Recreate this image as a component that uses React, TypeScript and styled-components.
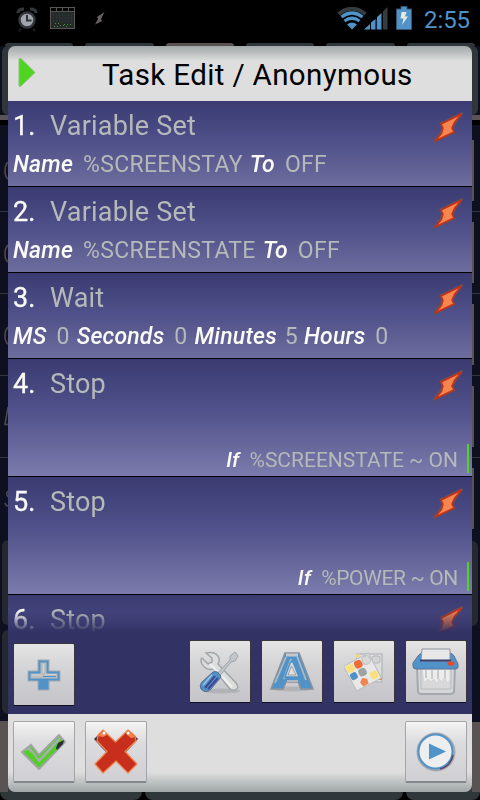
import React, { FunctionComponent, ReactNode } from 'react';
import styled, { createGlobalStyle } from 'styled-components';

const GlobalStyle = createGlobalStyle`
  body {
    margin: 0;
    background: #000;
    font-family: Roboto, 'Liberation Sans', sans-serif;
  }
`;

type RailPieceProps = {
  h: number;
  fill?: string;
};

type RowProps = {
  tall?: boolean;
};

type ToolButtonProps = {
  flat?: boolean;
};

const Screen = styled.div`
    width: 480px;
    height: 800px;
    overflow: hidden;
    background: #000;
    display: flex;
    flex-direction: column;
  `,
  StatusBar = styled.div`
    box-sizing: border-box;
    height: 43px;
    padding: 0 10px 6px 16px;
    display: flex;
    align-items: center;
    color: #4f93c9;
  `,
  StatusLeft = styled.div`
    flex: 1;
    display: flex;
    align-items: center;
    height: 38px;
  `,
  Clock = styled.span`
    font-size: 24px;
    line-height: 38px;
    margin-left: 11px;
    letter-spacing: -0.1px;
    padding-top: 2px;
  `,
  TabTops = styled.div`
    height: 3px;
    padding: 0 5px;
    display: flex;
    gap: 12px;
  `,
  TabTop = styled.div<{ active?: boolean }>`
    flex: 1;
    border-radius: 8px 8px 0 0;
    background: ${(props) => (props.active ? '#5a5252' : '#30373a')};
  `,
  Stage = styled.div`
    height: 746px;
    display: grid;
    grid-template-columns: 8px 464px 8px;
  `,
  Rail = styled.div`
    display: flex;
    flex-direction: column;
    overflow: hidden;
    background: #0e1020;
  `,
  RailPiece = styled.div<RailPieceProps>`
    flex: none;
    height: ${(props) => props.h}px;
    background: ${(props) => props.fill || '#0e1020'};
  `,
  RailButton = styled(RailPiece)`
    width: 2px;
    background: #5a5353;
  `,
  RailEdge = styled(RailPiece)<{ side: 'left' | 'right' }>`
    margin: ${(props) => (props.side === 'left' ? '0 0 0 2px' : '0 2px 0 0')};
    border-radius: ${(props) => (props.side === 'left' ? '8px 0 0 8px' : '0 8px 8px 0')};
  `,
  RailMark = styled.svg`
    flex: none;
    display: block;
    width: 8px;
    height: 20px;
    fill: none;
    stroke: #4c4848;
    stroke-width: 1.6;
  `,
  DialogBack = styled.div`
    background: #30373a;
  `,
  Dialog = styled.div`
    height: 746px;
    display: flex;
    flex-direction: column;
    overflow: hidden;
    border-radius: 7px;
    background: #323264;
  `,
  Header = styled.header`
    box-sizing: border-box;
    height: 55px;
    display: flex;
    align-items: center;
    padding: 3px 0 0 9px;
    background: linear-gradient(#a3a9a9 0, #b4b8b8 5px, #dedede 15px);
  `,
  PlayWrap = styled.span`
    display: flex;
    margin-top: -5px;
  `,
  Title = styled.h1`
    margin: 0 0 0 66px;
    font-size: 29.5px;
    line-height: 40px;
    font-weight: 400;
    letter-spacing: 0.36px;
    white-space: nowrap;
    color: #000;
  `,
  List = styled.div`
    height: 531px;
    overflow: hidden;
    mask-image: linear-gradient(#000 510px, transparent 532px);
  `,
  Row = styled.div<RowProps>`
    box-sizing: border-box;
    height: ${(props) => (props.tall ? 118 : 86)}px;
    padding-top: 5px;
    border-bottom: 1px solid #000;
    display: flex;
    flex-direction: column;
    background: ${(props) =>
      props.tall
        ? 'linear-gradient(#3b3b72, #50508a 42%, #7b7bac)'
        : 'linear-gradient(#3b3b72, #50508a 48%, #6d6d9e)'};
  `,
  RowHead = styled.div`
    height: 41px;
    display: flex;
    padding: 0 8px 0 5px;
    font-size: 27px;
    line-height: 40px;
  `,
  RowNumber = styled.span`
    width: 37px;
    color: #fafaf6;
    -webkit-text-stroke: 0.3px #fafaf6;
  `,
  RowName = styled.span`
    flex: 1;
    color: #b6b9b9;
    letter-spacing: 0.2px;
  `,
  Params = styled.div`
    display: flex;
    padding-left: 5px;
    font-size: 23px;
    line-height: 36px;
    white-space: pre;
  `,
  Label = styled.span`
    color: #fafaf6;
    font-style: italic;
    font-weight: 500;
    letter-spacing: 0.2px;
    margin-right: 10px;
  `,
  Value = styled.span`
    color: #b6b9b9;
    letter-spacing: 0.3px;
    margin-right: 7px;
  `,
  ShortValue = styled(Value)`
    margin: 0 6px 0 -2px;
  `,
  Condition = styled.div<{ tight?: boolean }>`
    margin: 39px 3px 0 0;
    height: 29px;
    display: flex;
    justify-content: flex-end;
    border-right: 2px solid #4fd51f;
    padding-right: 2px;
    font-size: 21px;
    line-height: 32px;
    white-space: pre;

    ${Value} {
      letter-spacing: ${(props) => (props.tight ? '-0.35px' : '0')};
    }
  `,
  Toolbar = styled.div`
    box-sizing: border-box;
    height: 82px;
    padding: 8px 5px 0 5px;
    display: flex;
    gap: 10px;
  `,
  PlusSlot = styled.div`
    flex: 1;
    padding-top: 3px;
  `,
  Footer = styled.footer`
    box-sizing: border-box;
    height: 78px;
    padding: 7px 5px 0 5px;
    display: flex;
    gap: 10px;
    background: linear-gradient(#dedede 58px, #a3a9a9 77px);
  `,
  Spacer = styled.div`
    flex: 1;
  `,
  ToolButton = styled.button<ToolButtonProps>`
    box-sizing: border-box;
    width: 62px;
    height: ${(props) => (props.flat ? 62 : 63)}px;
    padding: 0;
    display: flex;
    align-items: center;
    justify-content: center;
    border: 1px solid ${(props) => (props.flat ? '#a3a5a9' : '#38383a')};
    border-bottom: ${(props) => (props.flat ? '2px solid #85888b' : '1px solid #101020')};
    border-radius: 2px;
    background: ${(props) =>
      props.flat ? 'linear-gradient(#f4f4f4, #dcdcde 35%, #d0d0d4)' : 'linear-gradient(#e4e4e4, #d4d4d6 40%, #c4c4c9)'};
  `,
  TabBottoms = styled.div`
    height: 8px;
    display: grid;
    grid-template-columns: 142px 258px 74px;
    gap: 3px;
  `,
  TabBottom = styled.div`
    border-radius: 0 0 8px 8px;
    background: #30373a;
  `,
  BoltWrap = styled.span`
    display: flex;
    padding-top: 6px;
  `,
  AlarmWrap = styled.span`
    display: flex;
    margin-right: 12px;
  `,
  BoltStatusWrap = styled.span`
    display: flex;
    margin-left: 19px;
  `,
  BatteryWrap = styled.span`
    display: flex;
    margin: 0 1px 2px 8px;
  `,
  WifiWrap = styled.span`
    display: flex;
    margin-right: -3px;
  `;

const AlarmIcon = () => (
  <svg width="22" height="26" viewBox="0 0 22 26">
    <path d="M2 7Q2 3 8 3M14 3Q20 3 20 7" stroke="#33383c" strokeWidth="3" fill="none" />
    <circle cx="11" cy="14" r="7.5" fill="#a3a5ad" stroke="#34383c" strokeWidth="2.5" />
    <path d="M11 9v5.500h4.500" stroke="#30343a" strokeWidth="2" fill="none" />
    <path d="M5 23l-2 2M17 23l2 2" stroke="#1d2024" strokeWidth="2" />
  </svg>
);

const CalendarIcon = () => (
  <svg width="26" height="23" viewBox="0 0 26 23">
    <rect x="0.5" y="0.5" width="24" height="21" fill="#252a2a" stroke="#5a5656" />
    <path d="M1 2.500h23" stroke="#050505" strokeWidth="3" />
    <path d="M6.500 1v4M12.500 1v4M18.500 1v4M1 4.500h23" stroke="#575353" />
    <path d="M3 8h20M3 11h20M3 14h20" stroke="#3a4040" strokeDasharray="1 2" />
    <path d="M4 19.500h4M5 16.500h5M10 18.500h4M14 17.500h8M16 19.500h3" stroke="#499334" strokeDasharray="1 2" />
  </svg>
);

const SmallBolt = () => (
  <svg width="10" height="13" viewBox="0 0 10 13">
    <path d="M9.500 0L6 7l1 2L0 12.500 3 7 2 5z" fill="#696064" />
  </svg>
);

const WifiIcon = () => (
  <svg width="30" height="23" viewBox="0 0 30 23">
    <path d="M1.500 7Q15-3.500 28.500 7" stroke="#353c3f" strokeWidth="4" fill="none" />
    <path d="M4.500 10Q15 2 25.500 10M7.500 14Q15 8.500 22.500 14" stroke="#4f93c9" strokeWidth="3.200" fill="none" />
    <path d="M10 17.500Q15 13.500 20 17.500L15 22.500z" fill="#4f93c9" />
  </svg>
);

const SignalIcon = () => (
  <svg width="24" height="23" viewBox="0 0 24 23">
    <path d="M0 22.500L6 17v5.500zM7 15.500L11.500 12v10.500H7zM13 10l4.500-4v16.500H13z" fill="#4f93c9" />
    <path d="M19 4.500L23.500 0v22.500H19z" fill="#353c3f" />
    <path d="M12 12v10.500M17.500 6v16.500" stroke="#303a86" />
  </svg>
);

const BatteryIcon = () => (
  <svg width="16" height="24" viewBox="0 0 16 24">
    <path d="M5 0.500h6V3h4.500v20.500H0.500V3H5z" fill="#4f93c9" stroke="#3b5370" />
    <path d="M5.500 6h5L9 10.500h3L6 19l1.500-6.500h-3z" fill="#e8e8e0" />
  </svg>
);

const BoltIcon = () => (
  <svg width="31" height="31" viewBox="0 0 31 31">
    <path
      d="M29.500 1L7.500 11.500 9.500 15.500 7.500 21 0.500 30 21 20.500 19.500 16 22 11z"
      fill="#f6854e"
      stroke="#665454"
      strokeWidth="2"
    />
    <path
      d="M28.500 2L8 12l2 4-1.500 5.500L2 29 21 20l-2-4 2.500-5.500z"
      fill="#f6854e"
      stroke="#c72e1b"
      strokeWidth="1.500"
    />
  </svg>
);

const PlayMark = () => (
  <svg width="19" height="31" viewBox="0 0 19 31">
    <path d="M2 3Q2 0.500 4 1.500L18 15.500 4 29Q2 30.500 2 28z" fill="#4fd51f" stroke="#8bbd80" strokeLinejoin="round" />
  </svg>
);

const PlusIcon = () => (
  <svg width="34" height="32" viewBox="0 0 34 32">
    <path d="M12 2h9v11h11v8H21v9h-9v-9H2v-8h10z" fill="#b0b5ba" stroke="#aaa" strokeWidth="3" />
    <path d="M12.500 2.500h8v11h11v7h-11v9h-8v-9h-10v-7h10z" fill="#b9bcbd" stroke="#4f93c9" strokeWidth="2" />
    <path d="M13 20h7v9h-7zM16 17.500h13" fill="#4f93c9" stroke="#4f93c9" />
    <path d="M16.500 5v9M5 16h10M18 15.500h11" stroke="#d2d3d3" strokeWidth="1.200" />
  </svg>
);

const ToolsIcon = () => (
  <svg width="44" height="46" viewBox="0 0 44 46">
    <ellipse cx="24" cy="42" rx="18" ry="2.500" fill="#b2b3b7" />
    <path
      d="M8 4Q18 2 21 9 22 12 20 15L38 34Q42 39 37 41 34 42 31 39L16 20Q8 22 4 15 2 11 4 9L10 15 14 13 14 9z"
      fill="#dcdddd"
      stroke="#a1a5a8"
      strokeWidth="1.500"
    />
    <path d="M12 15l22 23" stroke="#f2f2f2" strokeWidth="2" />
    <path d="M17 27L32 11 32 7 37 3 40 7 37 12 33 13 20 29z" fill="#c3c6c9" stroke="#a0a4ab" />
    <path d="M15 23Q20 21 23 28L13 40Q8 45 3 40 1 36 4 33z" fill="#4f93c9" stroke="#59678d" />
    <path d="M17 27L7 39M20 29L10 40" stroke="#414892" strokeWidth="2" />
    <path d="M14 26L5 36" stroke="#9fc3df" strokeWidth="1.500" />
  </svg>
);

const LetterIcon = () => (
  <svg width="46" height="42" viewBox="0 0 46 42">
    <ellipse cx="23" cy="38" rx="20" ry="2.500" fill="#b2b3b7" />
    <path d="M16 2h14l14 36H32l-3-7H17l-3 7H2z" fill="#4f93c9" stroke="#8a9199" strokeWidth="1.500" />
    <path d="M17 4h12" stroke="#c4c8cb" strokeWidth="3" />
    <path d="M17 6L6 32M28 5l9 24M18 30h11M22 8l-7 20" stroke="#b0b9c0" strokeWidth="1.800" fill="none" />
    <path d="M21.500 11L16 26h14l-6-15z" fill="#d7d8da" stroke="#4f93c9" strokeWidth="1.500" />
    <path d="M22.500 15L19 24h8z" fill="#dedede" stroke="#9ba2a8" />
  </svg>
);

const GalleryIcon = () => (
  <svg width="40" height="42" viewBox="0 0 40 42">
    <path d="M13 3h25v28H13z" fill="#dedede" stroke="#bbbcbe" strokeWidth="1.500" />
    <rect x="28" y="5" width="8" height="7" rx="2" fill="#d2d3d5" stroke="#b3b5b8" />
    <circle cx="14" cy="5" r="2" fill="#f4d982" />
    <path d="M32 28h6" stroke="#ef8545" strokeWidth="2" />
    <g transform="rotate(-28 19 22)">
      <path d="M5 7h28v28H5z" fill="#e8e8e8" stroke="#bdbec0" />
      <rect x="6" y="8" width="8" height="8" rx="3" fill="#fae07b" />
      <rect x="15" y="8" width="8" height="8" rx="3" fill="#ef6d39" />
      <rect x="24" y="8" width="8" height="8" rx="3" fill="#d8d8d8" stroke="#bfc0c2" />
      <rect x="6" y="17" width="7" height="7" rx="2" fill="#5091c5" />
      <rect x="15" y="17" width="8" height="8" rx="3" fill="#9da3a3" />
      <rect x="24" y="25" width="8" height="8" rx="3" fill="#fae07b" />
      <path d="M16 26l4 3-1 5h-6l-1-5z" fill="#f08550" />
    </g>
  </svg>
);

const ShredderIcon = () => (
  <svg width="48" height="48" viewBox="0 0 48 48">
    <path d="M5 19h38l-1 25Q41 46 38 46H10Q6 46 6 43z" fill="#d5d6d8" stroke="#a5a8ae" strokeWidth="2" />
    <path d="M9 21v20h30V21" fill="#d8d8da" stroke="#b7b9bd" />
    <path
      d="M10 21h28v11l-3 3-2-6-3 5-3-3-2 5-3-5-3 3-3-3-4 4z"
      fill="#ececec"
      stroke="#d0d1d3"
      strokeWidth="0.800"
    />
    <path d="M14 22v8M20 22v9M26 22v9M33 22v8" stroke="#c9cacc" strokeWidth="2" />
    <path d="M6 8Q8 5 12 5h24q5 0 6 3l4 8v3q0 2-3 2H4q-3 0-3-3v-3z" fill="#4f93c9" stroke="#5c7096" />
    <path d="M10 1h28v12H9z" fill="#e8e8e8" stroke="#8f9499" />
    <path d="M8 12.500h31" stroke="#37406e" strokeWidth="2" />
    <ellipse cx="39" cy="15.500" rx="3.500" ry="2.200" fill="#e64b30" />
  </svg>
);

const CheckIcon = () => (
  <svg width="46" height="36" viewBox="0 0 46 36">
    <path d="M1 18L10 11l8 10L38 1l6 7L18 35z" fill="#51cf27" stroke="#a0a4a5" strokeWidth="2" />
    <path d="M3 17l6-4 9 12L38 3l2 2-22 24-7-10z" fill="#a6afa9" />
    <path d="M3 18l4-1 11 13L36 14" fill="none" stroke="#51cf27" strokeWidth="2" />
    <path d="M35 14l2-5 6-3-1 4-6 6z" fill="#272d31" />
  </svg>
);

const CrossIcon = () => (
  <svg width="46" height="46" viewBox="0 0 46 46">
    <path d="M1 10l9-8 13 12L36 2l9 8-12 13H13z" fill="#2d3037" stroke="#8a898c" />
    <path
      d="M10 1l12.500 12L35 1l7 6 1 5-11 10.500 12 12.500-9 9-12-12-13 12-8-9L14 22.500 4 12 5 6z"
      fill="#c72e1b"
      stroke="#f08550"
      strokeWidth="1.200"
      strokeLinejoin="round"
    />
    <path d="M5 7l5-5 4 4-4 2zM36 2l6 6-4 1-5-4z" fill="#f3824f" />
    <circle cx="11" cy="4" r="1.500" fill="#fff" />
    <circle cx="35" cy="4" r="1.500" fill="#fff" />
  </svg>
);

const RunIcon = () => (
  <svg width="40" height="40" viewBox="0 0 40 40">
    <circle cx="20" cy="20" r="18" fill="#f2f2f2" stroke="#a8a8b0" strokeWidth="3" />
    <circle cx="19.500" cy="19.500" r="17" fill="#eeeeee" stroke="#4f93c9" strokeWidth="2" />
    <path d="M24 37Q35 34 37 23" fill="none" stroke="#5c466a" strokeWidth="1.500" />
    <path d="M13 11.500L30 19.500l-17 8z" fill="#4f93c9" />
  </svg>
);

const RailCurve = () => (
  <RailMark viewBox="0 0 8 20">
    <path d="M8 2Q5 5 5 11T8 19" />
  </RailMark>
);

type ActionRowProps = {
  index: number;
  name: string;
  tall?: boolean;
  children?: ReactNode;
};

const ActionRow: FunctionComponent<ActionRowProps> = ({ index, name, tall, children }) => {
  return (
    <Row tall={tall}>
      <RowHead>
        <RowNumber>{index}.</RowNumber>
        <RowName>{name}</RowName>
        <BoltWrap>
          <BoltIcon />
        </BoltWrap>
      </RowHead>
      {children}
    </Row>
  );
};

const App: FunctionComponent = () => {
  return (
    <Screen>
      <GlobalStyle />
      <StatusBar>
        <StatusLeft>
          <AlarmWrap>
            <AlarmIcon />
          </AlarmWrap>
          <CalendarIcon />
          <BoltStatusWrap>
            <SmallBolt />
          </BoltStatusWrap>
        </StatusLeft>
        <WifiWrap>
          <WifiIcon />
        </WifiWrap>
        <SignalIcon />
        <BatteryWrap>
          <BatteryIcon />
        </BatteryWrap>
        <Clock>2:55</Clock>
      </StatusBar>
      <TabTops>
        <TabTop />
        <TabTop />
        <TabTop active />
        <TabTop />
        <TabTop />
        <TabTop />
      </TabTops>
      <Stage>
        <Rail>
          <RailEdge side="left" h={69} fill="#30373a" />
          <RailPiece h={5} fill="#5a5353" />
          <RailPiece h={5} fill="#000" />
          <RailPiece h={35} />
          <RailCurve />
          <RailPiece h={31} />
          <RailPiece h={1} fill="#33363c" />
          <RailPiece h={31} />
          <RailCurve />
          <RailPiece h={30} />
          <RailPiece h={1} fill="#33363c" />
          <RailPiece h={31} />
          <RailCurve />
          <RailPiece h={30} />
          <RailPiece h={1} fill="#33363c" />
          <RailPiece h={30} />
          <RailMark viewBox="0 0 8 20">
            <path d="M8 1L5 18.500h3" />
          </RailMark>
          <RailPiece h={31} />
          <RailPiece h={1} fill="#33363c" />
          <RailPiece h={30} />
          <RailMark viewBox="0 0 8 20">
            <path d="M8 3Q5.500 5 8 9M5 15Q6 18 8 18" />
          </RailMark>
          <RailPiece h={32} />
          <RailEdge side="left" h={85} fill="#25292f" />
          <RailPiece h={5} />
          <RailEdge side="left" h={84} fill="#25292f" />
          <RailPiece h={7} />
          <RailPiece h={72} fill="#5a5353" />
        </Rail>
        <DialogBack>
          <Dialog>
            <Header>
              <PlayWrap>
                <PlayMark />
              </PlayWrap>
              <Title>Task Edit / Anonymous</Title>
            </Header>
            <List>
              <ActionRow index={1} name="Variable Set">
                <Params>
                  <Label>Name</Label>
                  <Value>%SCREENSTAY</Value>
                  <Label>To</Label>
                  <Value>OFF</Value>
                </Params>
              </ActionRow>
              <ActionRow index={2} name="Variable Set">
                <Params>
                  <Label>Name</Label>
                  <Value>%SCREENSTATE</Value>
                  <Label>To</Label>
                  <Value>OFF</Value>
                </Params>
              </ActionRow>
              <ActionRow index={3} name="Wait">
                <Params>
                  <Label>MS</Label>
                  <Value>0</Value>
                  <Label>Seconds</Label>
                  <Value>0</Value>
                  <Label>Minutes</Label>
                  <ShortValue>5</ShortValue>
                  <Label>Hours</Label>
                  <Value>0</Value>
                </Params>
              </ActionRow>
              <ActionRow index={4} name="Stop" tall>
                <Condition>
                  <Label>If</Label>
                  <Value>%SCREENSTATE ~ ON</Value>
                </Condition>
              </ActionRow>
              <ActionRow index={5} name="Stop" tall>
                <Condition tight>
                  <Label>If</Label>
                  <Value>%POWER ~ ON</Value>
                </Condition>
              </ActionRow>
              <ActionRow index={6} name="Stop" tall />
            </List>
            <Toolbar>
              <PlusSlot>
                <ToolButton>
                  <PlusIcon />
                </ToolButton>
              </PlusSlot>
              <ToolButton>
                <ToolsIcon />
              </ToolButton>
              <ToolButton>
                <LetterIcon />
              </ToolButton>
              <ToolButton>
                <GalleryIcon />
              </ToolButton>
              <ToolButton>
                <ShredderIcon />
              </ToolButton>
            </Toolbar>
            <Footer>
              <ToolButton flat>
                <CheckIcon />
              </ToolButton>
              <ToolButton flat>
                <CrossIcon />
              </ToolButton>
              <Spacer />
              <ToolButton flat>
                <RunIcon />
              </ToolButton>
            </Footer>
          </Dialog>
        </DialogBack>
        <Rail>
          <RailEdge side="right" h={69} fill="#30373a" />
          <RailPiece h={5} fill="#5a5353" />
          <RailPiece h={5} fill="#000" />
          <RailPiece h={15} />
          <RailButton h={61} />
          <RailPiece h={10} />
          <RailPiece h={1} fill="#33363c" />
          <RailPiece h={10} />
          <RailButton h={61} />
          <RailPiece h={10} />
          <RailPiece h={1} fill="#33363c" />
          <RailPiece h={10} />
          <RailButton h={61} />
          <RailPiece h={10} />
          <RailPiece h={1} fill="#33363c" />
          <RailPiece h={10} />
          <RailButton h={61} />
          <RailPiece h={10} />
          <RailPiece h={1} fill="#33363c" />
          <RailPiece h={10} />
          <RailButton h={61} />
          <RailPiece h={12} />
          <RailEdge side="right" h={85} fill="#25292f" />
          <RailPiece h={96} />
          <RailPiece h={70} fill="#5a5353" />
        </Rail>
      </Stage>
      <TabBottoms>
        <TabBottom />
        <TabBottom />
        <TabBottom />
      </TabBottoms>
    </Screen>
  );
};

export default App;
